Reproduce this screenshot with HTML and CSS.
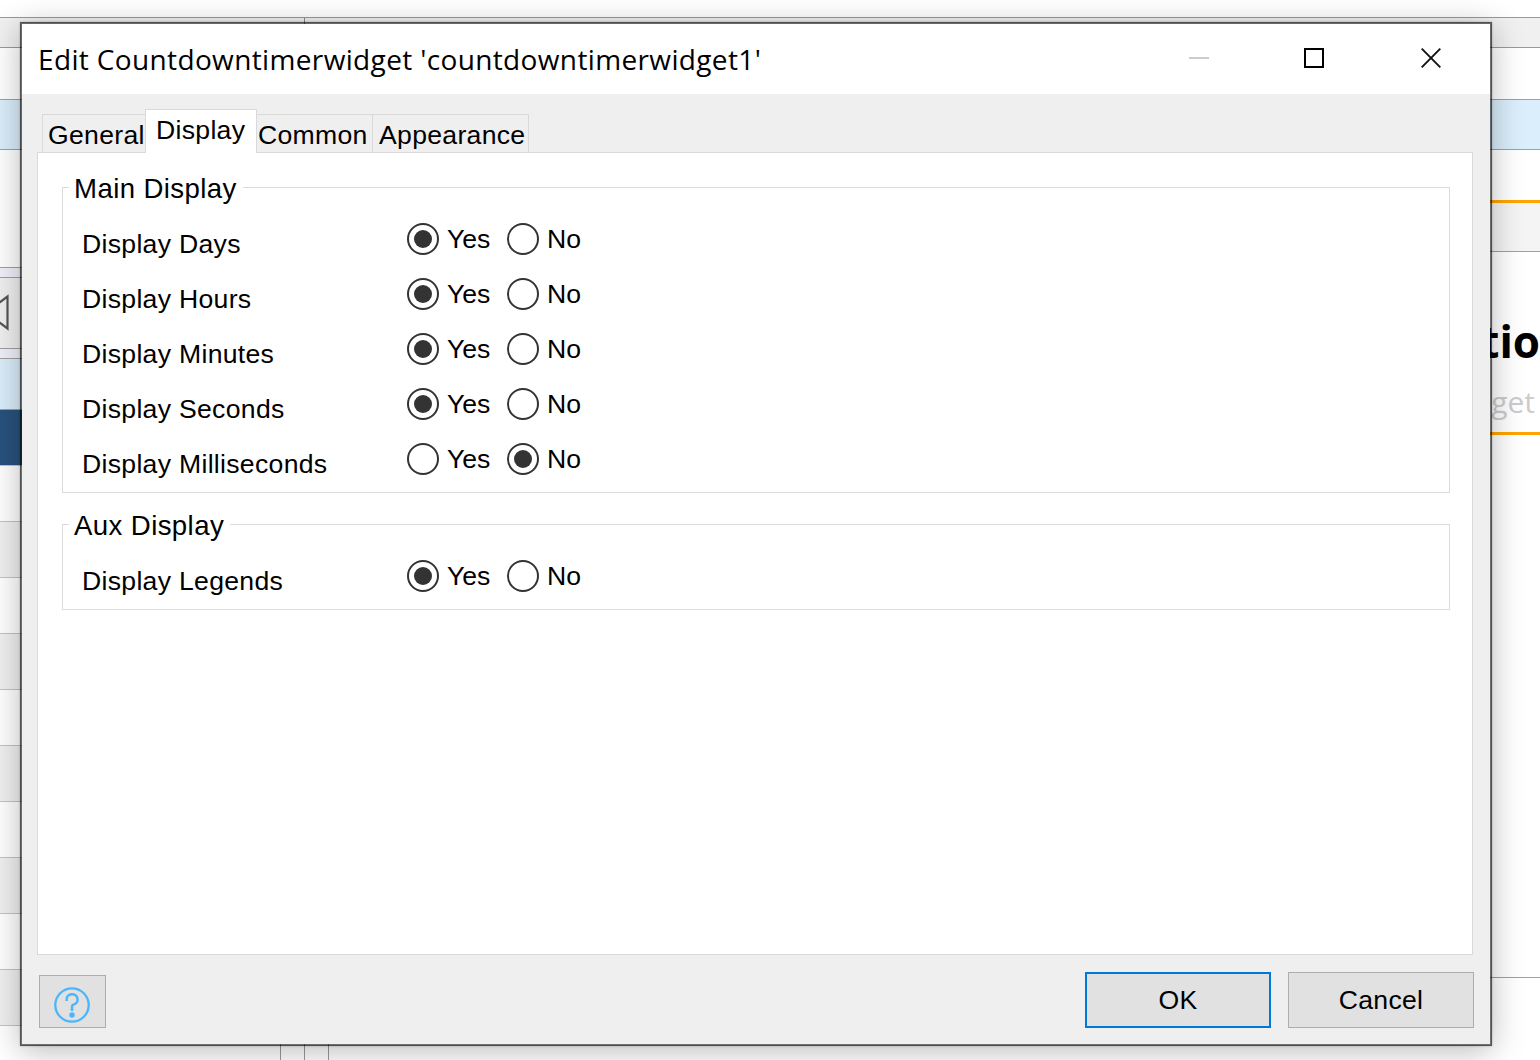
FILE: index.html
```html
<!DOCTYPE html>
<html lang="en">
<head>
<meta charset="utf-8">
<title>Edit Countdowntimerwidget</title>
<link rel="stylesheet" href="styles.css">
</head>
<body>
<div class="workspace">
  <div class="toolbar"></div>
  <div class="ruler"><span class="ruler-left"></span></div>
  <div class="panes">
    <div class="sidebar">
      <div class="cell c52"></div>
      <div class="cell c50 sky"></div>
      <div class="cell c118"></div>
      <div class="cell c10 gap"></div>
      <div class="cell c71 grey">
        <svg class="arrow" width="12" height="40" viewBox="0 0 12 40"><path d="M-14 19.500L7.500 3.500V35.500L-14 19.500" fill="none" stroke="#555" stroke-width="2.200"/></svg>
      </div>
      <div class="cell c10 gap"></div>
      <div class="cell c51 sky"></div>
      <div class="cell c56 navy"></div>
      <div class="cell c56"></div>
      <div class="cell c56 grey"></div>
      <div class="cell c56"></div>
      <div class="cell c56 grey"></div>
      <div class="cell c56"></div>
      <div class="cell c56 grey"></div>
      <div class="cell c56"></div>
      <div class="cell c56 grey"></div>
      <div class="cell c56"></div>
      <div class="cell c56 grey"></div>
      <div class="cell c56"></div>
    </div>
    <div class="gutter"></div>
    <div class="gutter"></div>
    <div class="editor">
      <div class="cell c52"></div>
      <div class="cell c50 sky"></div>
      <div class="blank"></div>
      <div class="cell band"></div>
      <div class="card"><div class="card-title">Action</div><div class="card-sub">Widget</div></div>
      <div class="cell rest"></div>
    </div>
  </div>
</div>

<div class="dialog">
  <div class="titlebar">
    <div class="title">Edit Countdowntimerwidget 'countdowntimerwidget1'</div>
    <div class="controls">
      <svg width="20" height="20" viewBox="0 0 20 20"><path d="M0 10H20" stroke="#ccc" stroke-width="2"/></svg>
      <svg width="20" height="20" viewBox="0 0 20 20"><path d="M1 1H19V19H1Z" fill="none" stroke="#000" stroke-width="2"/></svg>
      <svg width="20" height="20" viewBox="0 0 20 20"><path d="M.7 .7L19.300 19.300M19.300 .7L.7 19.300" stroke="#111" stroke-width="1.900"/></svg>
    </div>
  </div>
  <div class="body">
    <div class="tabs">
      <div class="tab general">General</div>
      <div class="tab active">Display</div>
      <div class="tab common">Common</div>
      <div class="tab appearance">Appearance</div>
    </div>
    <div class="page">
      <div class="group">
        <div class="legend">Main Display</div>
        <div class="row"><span class="name">Display Days</span><span class="radio on"></span><span class="opt">Yes</span><span class="radio"></span><span class="opt">No</span></div>
        <div class="row"><span class="name">Display Hours</span><span class="radio on"></span><span class="opt">Yes</span><span class="radio"></span><span class="opt">No</span></div>
        <div class="row"><span class="name">Display Minutes</span><span class="radio on"></span><span class="opt">Yes</span><span class="radio"></span><span class="opt">No</span></div>
        <div class="row"><span class="name">Display Seconds</span><span class="radio on"></span><span class="opt">Yes</span><span class="radio"></span><span class="opt">No</span></div>
        <div class="row"><span class="name">Display Milliseconds</span><span class="radio"></span><span class="opt">Yes</span><span class="radio on"></span><span class="opt">No</span></div>
      </div>
      <div class="group">
        <div class="legend">Aux Display</div>
        <div class="row"><span class="name">Display Legends</span><span class="radio on"></span><span class="opt">Yes</span><span class="radio"></span><span class="opt">No</span></div>
      </div>
    </div>
    <div class="footer">
      <div class="help">
        <svg width="36" height="36" viewBox="0 0 36 36" fill="none" stroke="#4db5fb"><circle cx="18" cy="18" r="16.700" stroke-width="2.300"/><path d="M12.600 14V12.900A5.500 5.300 0 1 1 19.500 17.600Q18 18 18 19.400V24" stroke-width="2.500"/><circle cx="18" cy="28" r="2.700" fill="#4db5fb" stroke="none"/></svg>
      </div>
      <div class="button primary">OK</div>
      <div class="button">Cancel</div>
    </div>
  </div>
</div>
</body>
</html>
```

FILE: styles.css
```css
* { box-sizing: border-box; }
body { margin: 0; width: 1540px; height: 1060px; overflow: hidden; background: #fff; color: #000; font: 26.6px/30px "Liberation Sans", Arial, sans-serif; letter-spacing: .3px; position: relative; }

/* application behind the dialog */
.workspace { height: 1060px; display: flex; flex-direction: column; overflow: hidden; }
.toolbar { height: 18px; flex: none; border-bottom: 1px solid #999; }
.ruler { height: 30px; flex: none; background: #f0f0f0; border-bottom: 1px solid #999; display: flex; }
.ruler-left { width: 305px; border-right: 1px solid #888; }
.panes { flex: 1; display: flex; min-height: 0; overflow: hidden; }
.sidebar { width: 281px; border-right: 1px solid #999; flex: none; overflow: hidden; }
.gutter { width: 24px; border-right: 1px solid #999; flex: none; }
.editor { flex: 1; }
.cell { border-bottom: 1px solid #a0a0a0; background: #fff; }
.c10 { height: 10px; }
.c50 { height: 50px; }
.c51 { height: 51px; }
.c52 { height: 52px; }
.c56 { height: 56px; border-color: #c4c4c4; }
.c71 { height: 71px; }
.c118 { height: 118px; }
.sky { background: #daeefb; }
.gap { background: #f0f0fa; }
.grey { background: #f0f0f0; }
.navy { background: #28527d; }
.arrow { display: block; }
.c71 { padding-top: 15px; }
.blank { height: 50px; }
.band { height: 52px; background: #f4f4f4; border-top: 3px solid #ffa500; }
.card { height: 183px; border-bottom: 3px solid #ffa500; padding: 61px 2px 0 0; text-align: right; letter-spacing: 0; }
.card-title { font: bold 44px/56px "Open Sans", sans-serif; margin-right: -31px; }
.card-sub { font: 30px/40px "Open Sans", sans-serif; color: #ccc; padding: 13px 3px 0 0; }
.rest { height: 543px; }

/* dialog window */
.dialog { position: absolute; left: 20px; top: 22px; width: 1472px; height: 1024px; border: 2px solid rgba(0,0,0,.56); background: #efefef; background-clip: padding-box; box-shadow: 0 0 2px rgba(0,0,0,.25), 0 5px 30px rgba(0,0,0,.27); display: flex; flex-direction: column; }
.titlebar { height: 70px; background: #fff; display: flex; justify-content: space-between; padding: 0 49px 0 16px; flex: none; }
.title { font: 28px/38px "Open Sans", sans-serif; letter-spacing: .36px; padding-top: 16px; white-space: nowrap; }
.controls { display: flex; gap: 97px; padding-top: 24px; }
.controls svg:first-child { margin-right: -2px; }
.body { flex: 1; padding: 15px 17px 0 15px; display: flex; flex-direction: column; }
.tabs { height: 44px; display: flex; align-items: flex-end; padding-left: 5px; position: relative; z-index: 1; margin-bottom: -1px; flex: none; }
.tab { height: 39px; border: 1px solid #d9d9d9; padding-top: 5px; white-space: nowrap; }
.general { width: 103px; border-right: 0; padding-left: 5px; }
.active { width: 112px; height: 44px; background: #fff; border-bottom: 0; padding: 5px 0 0 10px; }
.common { width: 116px; border-left: 0; padding-left: 1px; }
.appearance { width: 156px; border-left: 0; padding-left: 6px; }
.page { height: 803px; flex: none; background: #fff; border: 1px solid #d9d9d9; padding: 34px 22px 0 24px; }
.group { border: 1px solid #dcdcdc; padding: 23px 0 6px 17px; margin-bottom: 31px; position: relative; }
.legend { position: absolute; left: 6px; top: -15px; background: #fff; padding: 0 6px 0 5px; font-size: 27.6px; line-height: 32px; letter-spacing: .4px; }
.row { height: 55px; display: flex; align-items: center; }
.name { width: 327px; padding: 10px 0 0 2px; }
.radio { width: 32px; height: 32px; border: 2px solid #333; border-radius: 50%; margin-right: 8px; display: grid; place-items: center; flex: none; }
.radio.on::after { content: ""; width: 18px; height: 18px; border-radius: 50%; background: #333; }
.opt { width: 60px; letter-spacing: 0; }
.footer { display: flex; padding: 17px 0 0 2px; align-items: flex-end; }
.help { width: 67px; height: 53px; border: 1px solid #adadad; background: #e1e1e1; padding: 11px 0 0 14px; margin-right: auto; }
.button { width: 186px; height: 56px; border: 1px solid #adadad; background: #e1e1e1; text-align: center; line-height: 54px; margin-left: 17px; margin-right: -1px; }
.primary { border: 2px solid #0078d7; line-height: 52px; margin-right: 0; }
```
